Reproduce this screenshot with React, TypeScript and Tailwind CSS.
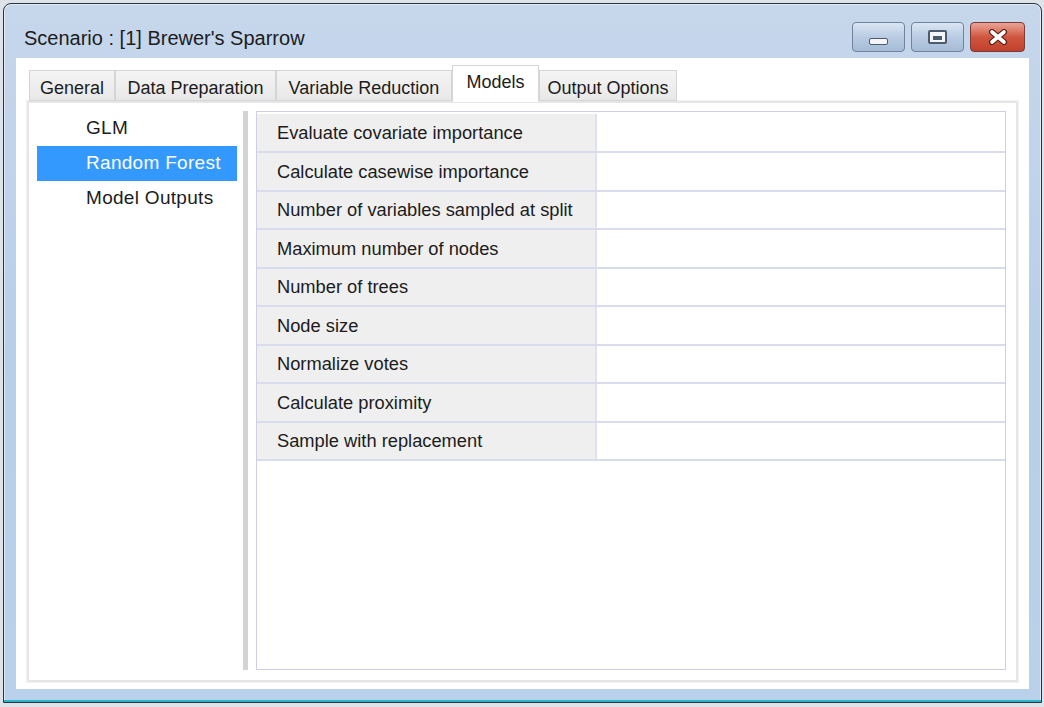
import React from 'react';

const tabs = ['General', 'Data Preparation', 'Variable Reduction', 'Models', 'Output Options'];
const tabWidths = [86, 161, 176, 87, 138];

const models = ['GLM', 'Random Forest', 'Model Outputs'];

const props = [
  'Evaluate covariate importance',
  'Calculate casewise importance',
  'Number of variables sampled at split',
  'Maximum number of nodes',
  'Number of trees',
  'Node size',
  'Normalize votes',
  'Calculate proximity',
  'Sample with replacement',
];
const rowHeights = [39, 39, 38, 39, 38, 39, 38, 39, 38];

const CaptionButton: React.FC<{ kind: 'min' | 'max' | 'close' }> = ({ kind }) => {
  const isClose = kind === 'close';
  return (
    <div
      className={`h-[30px] rounded-[4px] border flex items-center justify-center ${
        isClose
          ? 'w-[55px] border-[#7a3a36] bg-gradient-to-b from-[#e8a496] via-[#d0563f] to-[#c0402c]'
          : 'w-[53px] border-[#71839c] bg-gradient-to-b from-[#dbe6f3] via-[#b9cce3] to-[#a5bbd6]'
      }`}
    >
      {kind === 'min' && (
        <div className="w-[19px] h-[7px] mt-[8px] rounded-[2px] bg-[#f4f6f9] border border-[#4d5b6e]" />
      )}
      {kind === 'max' && (
        <div className="w-[19px] h-[14px] rounded-[2px] border-[2px] border-[#4d5b6e] bg-[#f4f6f9] flex items-center justify-center">
          <div className="w-[9px] h-[4px] bg-[#4d5b6e] mt-[1px]" />
        </div>
      )}
      {kind === 'close' && (
        <svg width="22" height="16" viewBox="0 0 22 16">
          <path d="M5 3 L17 13 M17 3 L5 13" stroke="#5a1e16" strokeWidth="6" strokeLinecap="round" />
          <path d="M5 3 L17 13 M17 3 L5 13" stroke="#ffffff" strokeWidth="3.6" strokeLinecap="round" />
        </svg>
      )}
    </div>
  );
};

export default function App() {
  return (
    <div
      className="w-[1044px] h-[707px] bg-[#dee3e9] pt-[3px] pl-[3px] overflow-hidden"
      style={{ fontFamily: '"Liberation Sans", Arial, sans-serif' }}
    >
      {/* window */}
      <div className="w-[1039px] h-[700px] rounded-t-[8px] border border-[#2c3340] bg-gradient-to-b from-[#c6d7ec] via-[#b8cfe9] to-[#b9d1ea] flex flex-col shadow-[inset_0_0_0_1px_rgba(255,255,255,0.5)]">
        {/* title bar */}
        <div className="h-[54px] flex items-start pl-[20px] pr-[16px] shrink-0">
          <div className="pt-[22px] text-[20px] leading-[24px] text-[#1c1c1c] flex-1">
            Scenario : [1] Brewer's Sparrow
          </div>
          <div className="flex gap-[6px] pt-[18px]">
            <CaptionButton kind="min" />
            <CaptionButton kind="max" />
            <CaptionButton kind="close" />
          </div>
        </div>

        {/* client */}
        <div className="mx-[12px] h-[631px] bg-white flex flex-col pt-[7px] px-[11px]">
          {/* tab strip */}
          <div className="flex items-end h-[36px] pl-[2px] relative z-10">
            {tabs.map((t, i) => {
              const active = t === 'Models';
              return (
                <div
                  key={t}
                  style={{ width: tabWidths[i] }}
                  className={`flex justify-center border border-[#d5d5d5] text-[18px] text-[#1c1c1c] ${
                    active
                      ? 'h-[37px] bg-white border-b-white -mb-[1px] pt-[3px]'
                      : 'h-[31px] bg-gradient-to-b from-[#f4f4f4] to-[#e8e8e8] pt-[4px]'
                  }`}
                >
                  {t}
                </div>
              );
            })}
          </div>

          {/* tab page */}
          <div className="h-[581px] border-[2px] border-[#e6e6e6] outline outline-1 outline-[#f3f3f3] flex pt-[8px] pl-[8px] pr-[10px] pb-[9px]">
            {/* model list */}
            <div className="w-[200px] flex flex-col text-[19px] tracking-[0.3px]">
              {models.map((m) => (
                <div
                  key={m}
                  className={`h-[35px] flex items-center pl-[49px] ${
                    m === 'Random Forest' ? 'bg-[#3399ff] text-white' : 'text-[#1c1c1c]'
                  }`}
                >
                  {m}
                </div>
              ))}
            </div>

            {/* splitter */}
            <div className="ml-[6px] w-[5px] bg-[#d4d4d4] mb-[1px]" />

            {/* property grid */}
            <div className="ml-[8px] flex-1 border border-[#cfcfe3] pt-[2px] mb-[1px] flex flex-col">
              {props.map((p, i) => (
                <div key={p} style={{ height: rowHeights[i] }} className="flex border-b-[2px] border-[#d9dcec]">
                  <div className="w-[340px] bg-[#efefef] border-r-[2px] border-[#dee2f0] flex items-center pl-[20px] text-[18.3px] text-[#1c1c1c]">
                    {p}
                  </div>
                  <div className="flex-1 bg-white" />
                </div>
              ))}
            </div>
          </div>
        </div>

        {/* bottom frame */}
        <div className="flex-1 border-b-[2px] border-[#2bb3c7]" />
      </div>
    </div>
  );
}
